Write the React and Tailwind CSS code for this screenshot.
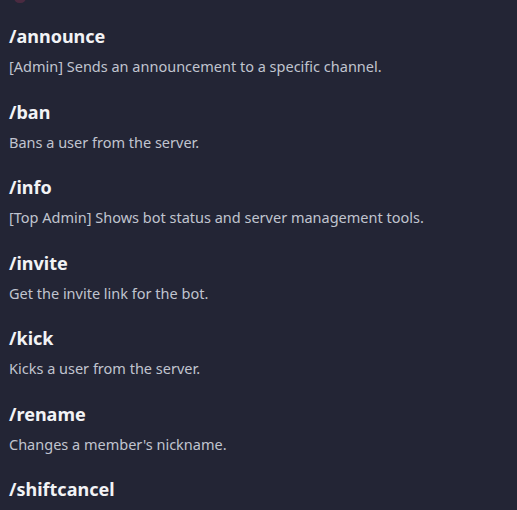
import React from "react";

const cmds = [
  ["/announce", "[Admin] Sends an announcement to a specific channel."],
  ["/ban", "Bans a user from the server."],
  ["/info", "[Top Admin] Shows bot status and server management tools."],
  ["/invite", "Get the invite link for the bot."],
  ["/kick", "Kicks a user from the server."],
  ["/rename", "Changes a member's nickname."],
  ["/shiftcancel", ""],
];

export default function App() {
  return (
    <div className="relative w-[517px] h-[510px] overflow-hidden bg-[#232535]" style={{ fontFamily: '"Noto Sans", sans-serif' }}>
      <div className="absolute left-[14px] top-[-8px] w-[12px] h-[11px] rounded-full bg-[#4a2a40]" />
      <div className="flex flex-col gap-[22.5px] pl-[9px] pt-[23px]">
        {cmds.map(([t, d]) => (
          <div key={t} className="flex flex-col gap-[7px]">
            <div className="text-[18px] leading-[26px] font-bold text-[#f2f3f5]">{t}</div>
            {d && <div className="text-[14.5px] leading-[20px] text-[#c0c4cf]">{d}</div>}
          </div>
        ))}
      </div>
    </div>
  );
}
